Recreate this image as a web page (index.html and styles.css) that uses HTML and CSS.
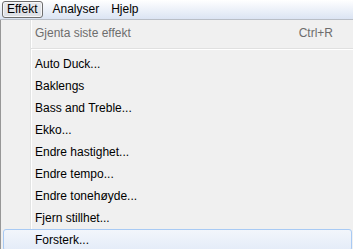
FILE: index.html
```html
<!DOCTYPE html>
<html lang="no">
<head>
  <meta charset="UTF-8" />
  <title>Effekt</title>
  <link rel="stylesheet" href="styles.css">
</head>
<body>
  <div class="menubar">
    <span class="top-item open">Effekt</span>
    <span class="top-item">Analyser</span>
    <span class="top-item">Hjelp</span>
  </div>

  <div class="dropdown">
    <div class="item disabled"><span>Gjenta siste effekt</span><span class="shortcut">Ctrl+R</span></div>
    <div class="separator"></div>
    <div class="item">Auto Duck...</div>
    <div class="item">Baklengs</div>
    <div class="item">Bass and Treble...</div>
    <div class="item">Ekko...</div>
    <div class="item">Endre hastighet...</div>
    <div class="item">Endre tempo...</div>
    <div class="item">Endre tonehøyde...</div>
    <div class="item">Fjern stillhet...</div>
    <div class="item hover">Forsterk...</div>
  </div>
</body>
</html>
```

FILE: styles.css
```css
body {
  margin: 0;
  font-family: 'Liberation Sans', Arial, sans-serif;
  font-size: 12px;
  color: #000;
  background: #f0f0f0;
  overflow: hidden;
}
/* Menu bar */
.menubar {
  display: flex;
  align-items: center;
  height: 19px;
  padding-left: 2px;
  background: linear-gradient(#ffffff, #dbe4f3);
  border-bottom: 1px solid #b9bec6;
}
.top-item {
  padding: 0 6px;
  height: 17px;
  line-height: 17px;
}
.top-item.open {
  height: 15px;
  line-height: 15px;
  padding: 0 5px 0 4px;
  margin-right: 3px;
  border: 1px solid #6e6e6e;
  border-radius: 3px;
  background: linear-gradient(#e8eaee, #dcdfe5);
  box-shadow: inset 0 0 0 1px #f6f6f8;
}
/* Dropdown */
.dropdown {
  border-left: 1px solid #979797;
  padding-top: 2px;
  background: linear-gradient(to right, transparent 29px, #e2e3e3 29px, #e2e3e3 30px, #fff 30px, #fff 31px, transparent 31px);
}
.item {
  display: flex;
  justify-content: space-between;
  align-items: center;
  height: 22px;
  padding: 0 20px 0 34px;
}
.item.disabled { color: #6d6d6d; }
.separator {
  height: 9px;
  margin-left: 30px;
  background: linear-gradient(transparent 4px, #e0e0e0 4px, #e0e0e0 5px, #fff 5px, #fff 6px, transparent 6px);
}
.item.hover {
  margin: 0 1px 0 2px;
  padding-left: 31px;
  height: 20px;
  border: 1px solid #a8caf4;
  border-radius: 3px;
  background: linear-gradient(#f2f6fb, #e4ecf8);
}
```
